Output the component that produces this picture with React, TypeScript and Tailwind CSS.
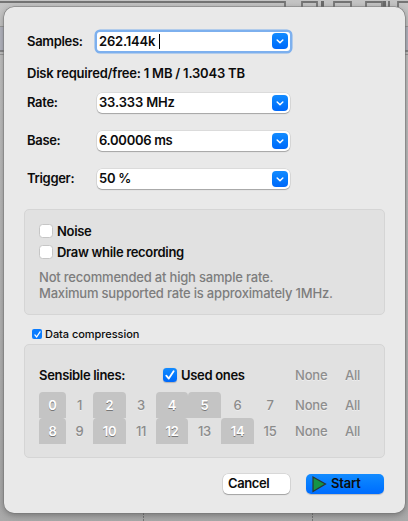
import React from "react";

function Chevron() {
  return (
    <span className="flex h-4 w-4 items-center justify-center rounded-[4px] bg-gradient-to-b from-[#138bff] to-[#0068fa]">
      <svg width="8" height="5" viewBox="0 0 8 5" fill="none" stroke="white" strokeWidth="1.5" strokeLinecap="round" strokeLinejoin="round">
        <path d="M1.2 1L4 3.7L6.8 1" />
      </svg>
    </span>
  );
}

function Check({ small = false }: { small?: boolean }) {
  return (
    <span
      className={
        small
          ? "flex h-[10px] w-[10px] shrink-0 items-center justify-center rounded-[2px] bg-[#0a7cff]"
          : "flex h-[14px] w-[14px] shrink-0 items-center justify-center rounded-[3.5px] bg-gradient-to-b from-[#138bff] to-[#0068fa] shadow-[0_0.5px_1px_#0003]"
      }
    >
      <svg width={small ? 7 : 10} height={small ? 7 : 10} viewBox="0 0 10 10" fill="none" stroke="white" strokeWidth="1.8" strokeLinecap="round" strokeLinejoin="round">
        <path d="M1.3 5.6L3.8 8.6L8.6 1.2" />
      </svg>
    </span>
  );
}

function EmptyBox() {
  return <span className="h-[14px] w-[14px] shrink-0 rounded-[3.5px] border border-[#c6c6c6] bg-white" />;
}

function Field({ label, value, tracking, focused = false }: { label: string; value: string; tracking: string; focused?: boolean }) {
  return (
    <div className="flex h-[38px] items-center">
      <span className={focused ? "w-[70px]" : "w-[70px] pb-[2px]"}>{label}</span>
      <div
        className={
          focused
            ? "flex h-[19px] w-[193px] items-center justify-between rounded-[3px] bg-white pr-[2px] pl-[2px] shadow-[0_0_0_2.5px_#7db0ee]"
            : "flex h-5 w-[193px] items-center justify-between rounded-[5px] bg-white pr-[2px] pl-[2px] shadow-[0_0_0_0.5px_#0000001f,0_1px_1px_#00000040]"
        }
      >
        <span className={focused ? "flex items-center" : "flex items-center pb-[2px]"}>
          <span className={tracking}>{value}</span>
          {focused && <span className="ml-[4px] h-[15px] w-px bg-black" />}
        </span>
        <Chevron />
      </div>
    </div>
  );
}

const columns = "grid grid-cols-[27px_27px_33px_30px_32px_33px_33px_32px]";

function LineRow({ start, active }: { start: number; active: number[] }) {
  return (
    <div className="flex h-[26px] items-center">
      <div className={columns}>
        {Array.from({ length: 8 }, (_, i) => start + i).map((n) => (
          <span
            key={n}
            className={
              active.includes(n)
                ? "flex h-[26px] items-center justify-center rounded-t-[4px] bg-[#c4c4c4] text-white [text-shadow:0_1px_0_#777]"
                : "flex h-[26px] items-center justify-center font-medium text-[#8b8b8b] [text-shadow:0_1px_0_#eee]"
            }
          >
            {n}
          </span>
        ))}
      </div>
      <NoneAll />
    </div>
  );
}

function NoneAll() {
  return (
    <div className="ml-auto flex w-[75px] font-medium tracking-[-0.2px] text-[#8e8e8e] [text-shadow:0_1px_0_#eee]">
      <span className="w-[50px]">None</span>
      <span>All</span>
    </div>
  );
}

export default function App() {
  return (
    <div className="relative h-[521px] w-[408px] overflow-hidden bg-gradient-to-b from-[#c4c4c4] to-[#a9a9a9] pt-[7px] pl-1 font-['Inter','Liberation_Sans',sans-serif] text-[13px] leading-4 font-semibold tracking-[-0.32px] text-[#0c0c0c]">
      <svg className="absolute inset-0" width="408" height="521" fill="none">
        <path d="M0 26H408V51H0Z" fill="#b3b5bf" />
        <path d="M0 51H408" stroke="#777" strokeWidth="1.6" />
        <path d="M0 26.5H408M0 54.5H408" stroke="#999" />
        <path d="M0 2H285V8M302 8V2H317V8M334 8V2H351V8M366 8V2H382V8M398 8V2H408" stroke="#747474" strokeWidth="1.8" />
        <path d="M322.5 1V8M384.5 1V8" stroke="#6b6b6b" strokeWidth="3" />
        <path d="M389 1V8" stroke="#777" strokeWidth="2" />
        <path d="M143.5 513V521M312.5 513V521" stroke="#777" strokeDasharray="2 1" />
      </svg>
      <main className="relative h-[506px] w-[401px] rounded-[10px] bg-[#e9e9e9] px-5 pt-[15px] shadow-[0_0_0_0.5px_#777,0_2px_7px_#0005]">
        <div className="pl-[3px]">
          <Field label="Samples:" value="262.144k" tracking="tracking-[-0.2px]" focused />
          <p className="flex h-[26px] items-center tracking-[-0.21px]">Disk required/free: 1 MB / 1.3043 TB</p>
          <div className="-mt-[2px]">
            <Field label="Rate:" value="33.333 MHz" tracking="tracking-[-0.15px]" />
            <Field label="Base:" value="6.00006 ms" tracking="tracking-[-0.3px]" />
            <Field label="Trigger:" value="50 %" tracking="tracking-[-0.3px]" />
          </div>
        </div>
        <section className="mt-[11px] h-[106px] w-[361px] rounded-[5px] border border-[#d5d5d5] bg-[#e1e1e1] pt-[11px] pl-[14px]">
          <label className="flex h-[20px] items-center gap-1"><EmptyBox />Noise</label>
          <label className="flex h-[21px] items-center gap-1"><EmptyBox />Draw while recording</label>
          <p className="mt-[7px] font-medium tracking-[-0.2px] text-[#7d7d7d]">Not recommended at high sample rate.<br />Maximum supported rate is approximately 1MHz.</p>
        </section>
        <label className="mt-[11px] flex h-4 items-center gap-[3px] pl-2 text-[11px] font-medium tracking-[-0.05px]"><Check small />Data compression</label>
        <section className="mt-[2px] h-[114px] w-[361px] rounded-[5px] border border-[#d5d5d5] bg-[#e1e1e1] pt-[21px] pr-[14px] pl-[14px]">
          <div className="mb-[8px] flex h-[18px] items-center">
            <span className="w-[124px]">Sensible lines:</span>
            <label className="flex items-center gap-1"><Check />Used ones</label>
            <NoneAll />
          </div>
          <LineRow start={0} active={[0, 2, 4, 5]} />
          <LineRow start={8} active={[8, 10, 12, 14]} />
        </section>
        <footer className="mt-4 flex justify-end gap-4 pr-[1px]">
          <button className="h-5 w-[67px] rounded-[5px] bg-white pb-[2px] pl-[5px] text-left tracking-[-0.38px] shadow-[0_0_0_0.5px_#00000025,0_1px_1px_#00000040]">Cancel</button>
          <button className="flex h-5 w-[78px] items-center rounded-[5px] bg-gradient-to-b from-[#138bff] to-[#006cff] pl-[6px] tracking-[-0.2px] shadow-[0_1px_1px_#00000030]">
            <svg className="-mt-[1px]" width="15" height="18" viewBox="0 0 15 18"><path d="M1 2L13.5 9L1 16.5Z" fill="#159447" stroke="#2b3530" strokeWidth="1.2" /></svg>
            <span className="ml-1 pb-[2px]">Start</span>
          </button>
        </footer>
      </main>
    </div>
  );
}
